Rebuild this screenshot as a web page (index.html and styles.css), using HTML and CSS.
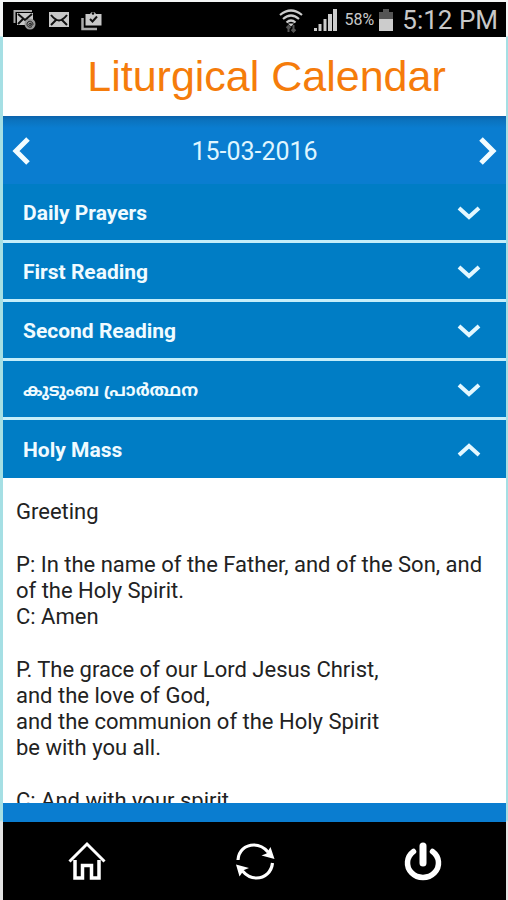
FILE: index.html
```html
<!DOCTYPE html>
<html lang="en">
<head>
<meta charset="utf-8">
<meta name="viewport" content="width=device-width, initial-scale=1">
<title>Liturgical Calendar</title>
<link rel="stylesheet" href="styles.css">
</head>
<body>
<div class="app">
  <div class="status">
    <div class="status-group notices">
      <svg width="24" height="22" viewBox="0 0 24 22" aria-hidden="true">
        <path d="M1.500 14V2H19" fill="none" stroke="#aaa" stroke-width="2"/>
        <rect x="4" y="4" width="16" height="12" fill="#c8c8c8"/>
        <path d="M5 5l7 6 7-6M5 15l5-5M19 15l-5-5" fill="none" stroke="#111" stroke-width="2"/>
        <circle cx="17" cy="15" r="5.500" fill="#999"/>
        <path d="M19 17.500a3 3 0 1 1 1-2.500c0 2-2 1.500-2 0v-1.500M18 15a1.200 1.200 0 1 1-2 0 1.200 1.200 0 0 1 2 0" fill="none" stroke="#222" stroke-width="1"/>
      </svg>
      <svg width="20" height="15" viewBox="0 0 20 15" aria-hidden="true">
        <rect width="20" height="15" fill="#c8c8c8"/>
        <path d="M2 3q4 5 8 5.500Q14 8 18 3M2 13l5-5M18 13l-5-5" fill="none" stroke="#111" stroke-width="2"/>
      </svg>
      <svg width="21" height="22" viewBox="0 0 21 22" aria-hidden="true">
        <path d="M1.500 9v11H16" fill="none" stroke="#aaa" stroke-width="2.500"/>
        <path d="M4.500 5H9a3.200 3.200 0 0 1 6 0h5.500v11.500h-16z" fill="#c8c8c8"/>
        <circle cx="12" cy="4.500" r="1.200" fill="#000"/>
        <path d="M9 10l2.500 2.500L16 7.500" fill="none" stroke="#111" stroke-width="2"/>
      </svg>
    </div>
    <div class="status-group">
      <svg width="24" height="26" viewBox="0 0 24 26" aria-hidden="true">
        <path d="M1 8q11-9 22 0M4 12q8-7 16 0M7.500 15.500q4.500-4 9 0" fill="none" stroke="#ccc" stroke-width="2.200"/>
        <path d="M9 16.500h6l-3 3z" fill="#ccc"/>
        <path d="M9.500 25v-6M7.500 21l2-2 2 2M14.500 18v6M12.500 22.500l2 2 2-2" fill="none" stroke="#555" stroke-width="2"/>
      </svg>
      <svg class="signal" width="24" height="23" viewBox="0 0 24 23" aria-hidden="true">
        <path d="M1 20h3v3H1zM5.500 16h3v7h-3zM10.500 11h3v12h-3zM15 6h4v17h-4zM20 1h4v22h-4z" fill="#ccc"/>
      </svg>
      <span class="percent">58%</span>
      <svg width="16" height="24" viewBox="0 0 16 24" aria-hidden="true">
        <path d="M5 1h6v3h4v8H1V4h4z" fill="#555"/>
        <path d="M1 11h14v12H1z" fill="#ccc"/>
      </svg>
      <span class="clock">5:12 PM</span>
    </div>
  </div>

  <header class="title-bar"><h1>Liturgical Calendar</h1></header>

  <nav class="date-bar" aria-label="Date">
    <button type="button" aria-label="Previous day">
      <svg width="20" height="28" viewBox="0 0 20 28"><path d="M17 2L5 14l12 12" fill="none" stroke="#f2fcff" stroke-width="5"/></svg>
    </button>
    <time datetime="2016-03-15">15-03-2016</time>
    <button type="button" aria-label="Next day">
      <svg width="20" height="28" viewBox="0 0 20 28"><path d="M3 2l12 12L3 26" fill="none" stroke="#f2fcff" stroke-width="5"/></svg>
    </button>
  </nav>

  <main class="sections">
    <button type="button" class="section" aria-expanded="false">Daily Prayers
      <svg width="24" height="16" viewBox="0 0 24 16"><path d="M2 3l10 9L22 3" /></svg></button>
    <button type="button" class="section" aria-expanded="false">First Reading
      <svg width="24" height="16" viewBox="0 0 24 16"><path d="M2 3l10 9L22 3" /></svg></button>
    <button type="button" class="section" aria-expanded="false">Second Reading
      <svg width="24" height="16" viewBox="0 0 24 16"><path d="M2 3l10 9L22 3" /></svg></button>
    <button type="button" class="section" aria-expanded="false"><span class="malayalam" lang="ml">കുടുംബ പ്രാർത്ഥന</span>
      <svg width="24" height="16" viewBox="0 0 24 16"><path d="M2 3l10 9L22 3" /></svg></button>
    <button type="button" class="section" aria-expanded="true" aria-controls="mass">Holy Mass
      <svg width="24" height="16" viewBox="0 0 24 16"><path d="M2 13l10-9 10 9" /></svg></button>
    <div class="reading" id="mass">
      <p>Greeting</p>
      <p>P: In the name of the Father, and of the Son, and of the Holy Spirit.<br>C: Amen</p>
      <p>P. The grace of our Lord Jesus Christ,<br>and the love of God,<br>and the communion of the Holy Spirit<br>be with you all.</p>
      <p>C: And with your spirit.</p>
    </div>
  </main>

  <nav class="toolbar" aria-label="Main">
    <button type="button" aria-label="Home">
      <svg width="38" height="40" viewBox="0 0 38 40" fill="none" stroke="#fff">
        <path d="M1.500 20.500L19 3l17.500 17.500" stroke-width="3"/>
        <path d="M7 19v18h7.500V24.500h9V37H31V19" stroke-width="3.500"/>
      </svg>
    </button>
    <button type="button" aria-label="Refresh">
      <svg width="40" height="40" viewBox="0 0 40 40">
        <path d="M3 19C3.500 10 10 4 19 4q8 0 14 7M37.500 22C36.500 31 30 37 21.500 37q-8 0-14-7" fill="none" stroke="#fff" stroke-width="3.200"/>
        <path d="M39.500 18L26.500 14.500l5-2 4-6.500zM1 23.500l13 3.500-5 2-4.500 6.500z" fill="#fff"/>
      </svg>
    </button>
    <button type="button" aria-label="Exit">
      <svg width="38" height="40" viewBox="0 0 38 40" fill="none" stroke="#fff" stroke-linecap="round">
        <path d="M9.500 10.500a15.500 14.500 0 1 0 19 0" stroke-width="5.500"/>
        <path d="M19 5v17" stroke-width="7"/>
      </svg>
    </button>
  </nav>
</div>
</body>
</html>
```
FILE: styles.css
```css
* {
  box-sizing: border-box;
}

body {
  margin: 0;
  background: #fff;
  font-family: Roboto, "Noto Sans", sans-serif;
}

button {
  border: 0;
  margin: 0;
  background: none;
  color: inherit;
  font: inherit;
  cursor: pointer;
}

svg {
  display: block;
  flex: none;
}

.app {
  display: flex;
  flex-direction: column;
  height: 100vh;
  padding: 2px 2px 0 3px;
  background: linear-gradient(#f4f6f6 36px, #a5dfe4 37px, #a5dfe4 820px, #e4e4e4 822px);
}

.status {
  display: flex;
  justify-content: space-between;
  align-items: center;
  height: 35px;
  padding: 0 8px 0 10px;
  background: #000;
  color: #c8c8c8;
}

.status-group {
  display: flex;
  align-items: center;
  gap: 4px;
}

.notices {
  gap: 12px;
}

.signal {
  margin: 0 4px 0 6px;
}

.percent {
  font-size: 16px;
}

.clock {
  margin-left: 4px;
  font-size: 26px;
  line-height: 35px;
  padding-top: 2px;
}

.title-bar {
  height: 79px;
  background: #fff;
  color: #f57c0b;
  text-align: center;
}

.title-bar h1 {
  margin: 0;
  padding-left: 24px;
  font: 43px/78px "Liberation Sans", Arial, sans-serif;
}

.date-bar {
  display: flex;
  justify-content: space-between;
  align-items: center;
  height: 68px;
  padding: 2px 8px 0;
  background: linear-gradient(#0b62ab, #0b72bd 4px, #0a7dd0 12px);
  color: #dff5ff;
  font-size: 25px;
}

.date-bar button {
  padding: 0;
}

.sections {
  display: flex;
  flex: 1;
  flex-direction: column;
  min-height: 0;
  border-bottom: 19px solid #0a7dd0;
}

.section {
  display: flex;
  flex: none;
  justify-content: space-between;
  align-items: center;
  height: 59px;
  padding: 2px 25px 0 20px;
  border-bottom: 3px solid #c4eefa;
  background: #007dc5;
  color: #f0fbff;
  font-size: 21px;
  font-weight: 700;
  text-align: left;
}

.section[aria-expanded="true"] {
  height: 58px;
  border-bottom: 0;
}

.section path {
  fill: none;
  stroke: #e4f8ff;
  stroke-width: 4;
}

.malayalam {
  padding-top: 4px;
  font-family: "Noto Sans Malayalam", Manjari, Meera, sans-serif;
  font-size: 17px;
}

.reading {
  flex: 1;
  min-height: 0;
  padding: 21px 10px 0 13px;
  overflow-y: auto;
  scrollbar-width: none;
  background: #fff;
  color: #222;
  font-size: 22px;
  line-height: 26px;
}

.reading p {
  margin: 0 0 27px;
}

.toolbar {
  display: flex;
  justify-content: space-around;
  align-items: center;
  height: 78px;
  background: #000;
}

.toolbar button {
  padding: 0;
}
```
